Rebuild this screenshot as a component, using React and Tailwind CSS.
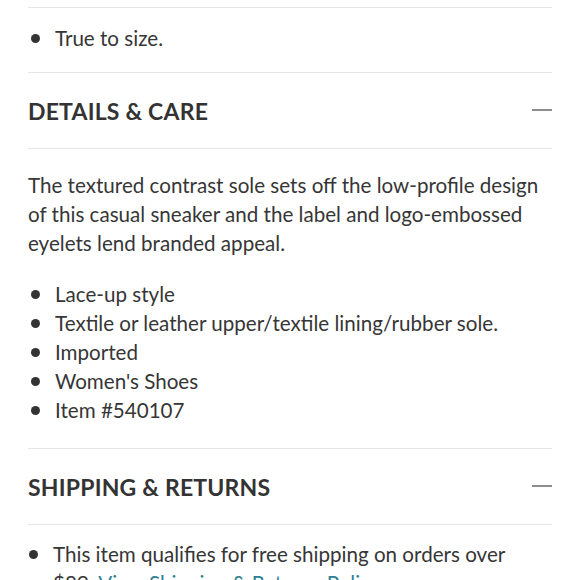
export default function App() {
  const Bullet = ({ children }) => (
    <li className="flex items-center h-[29px]">
      <span className="ml-[3px] w-[9px] h-[9px] rounded-full bg-[#333] shrink-0" />
      <span className="w-[15px] shrink-0" />
      <span>{children}</span>
    </li>
  );
  const Minus = () => <span className="block w-[20px] h-[2px] bg-[#8c8c8c] -mt-[4px]" />;
  return (
    <div className="w-[580px] h-[580px] overflow-hidden bg-white text-[#363636] font-['Lato',sans-serif] text-[20.6px]">
      <div className="mx-[28px] pt-[7px]">
        <div className="border-t border-[#e6e6e6] pt-[16px] pb-[19px]">
          <ul>
            <Bullet>True to size.</Bullet>
          </ul>
        </div>
        <div className="border-t border-[#e6e6e6] h-[76px] pt-[2px] flex items-center justify-between">
          <h2 className="font-bold text-[23px] tracking-[0.2px] text-[#333]">DETAILS &amp; CARE</h2>
          <Minus />
        </div>
        <div className="border-t border-[#e6e6e6] pt-[22px] pb-[23px]">
          <p className="leading-[29px]">
            The textured contrast sole sets off the low-profile design of this casual sneaker and the label and logo-embossed eyelets lend branded appeal.
          </p>
          <ul className="mt-[22px]">
            <Bullet>Lace-up style</Bullet>
            <Bullet>Textile or leather upper/textile lining/rubber sole.</Bullet>
            <Bullet>Imported</Bullet>
            <Bullet>Women's Shoes</Bullet>
            <Bullet>Item #540107</Bullet>
          </ul>
        </div>
        <div className="border-t border-[#e6e6e6] h-[76px] pt-[2px] flex items-center justify-between">
          <h2 className="font-bold text-[23px] tracking-[0.2px] text-[#333]">SHIPPING &amp; RETURNS</h2>
          <Minus />
        </div>
        <div className="border-t border-[#e6e6e6] pt-[15px]">
          <div className="flex">
            <span className="mt-[10px] ml-[1px] w-[9px] h-[9px] rounded-full bg-[#333] shrink-0" />
            <span className="w-[15px] shrink-0" />
            <p className="leading-[29px] w-[470px]">
              This item qualifies for free shipping on orders over $89. <span className="text-[#2f7f93]">View Shipping &amp; Returns Policy</span>
            </p>
          </div>
        </div>
      </div>
    </div>
  );
}
